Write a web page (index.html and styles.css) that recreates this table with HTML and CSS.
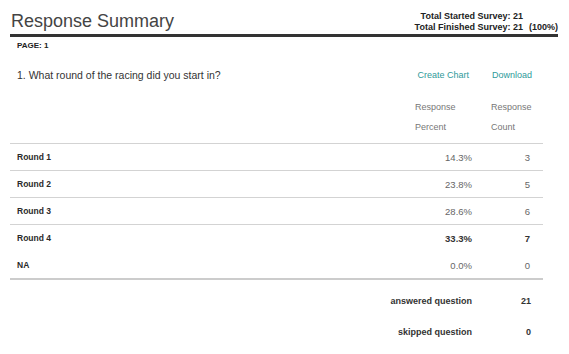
FILE: index.html
```html
<!DOCTYPE html>
<html lang="en">
<head>
  <meta charset="UTF-8" />
  <title>Response Summary</title>
  <link rel="stylesheet" href="styles.css">
</head>
<body>
  <div class="summary-header">
    <h1>Response Summary</h1>
    <div class="totals">
      <span class="total-label">Total Started Survey: 21</span>
      <span></span>
      <span class="total-label">Total Finished Survey: 21</span>
      <span class="total-pct">(100%)</span>
    </div>
  </div>

  <div class="summary">
    <div class="page-label">PAGE: 1</div>

    <div class="question">
      <span class="question-text">1. What round of the racing did you start in?</span>
      <a class="action" href="#">Create Chart</a>
      <a class="action" href="#">Download</a>
    </div>

    <div class="results">
      <div class="row head">
        <span></span>
        <span class="col-pct">Response<br>Percent</span>
        <span class="col-count">Response<br>Count</span>
      </div>
      <div class="row">
        <span class="answer">Round 1</span>
        <span class="col-pct">14.3%</span>
        <span class="col-count">3</span>
      </div>
      <div class="row">
        <span class="answer">Round 2</span>
        <span class="col-pct">23.8%</span>
        <span class="col-count">5</span>
      </div>
      <div class="row">
        <span class="answer">Round 3</span>
        <span class="col-pct">28.6%</span>
        <span class="col-count">6</span>
      </div>
      <div class="row top-answer">
        <span class="answer">Round 4</span>
        <span class="col-pct">33.3%</span>
        <span class="col-count">7</span>
      </div>
      <div class="row last">
        <span class="answer">NA</span>
        <span class="col-pct">0.0%</span>
        <span class="col-count">0</span>
      </div>
    </div>

    <div class="totals-footer">
      <div class="row">
        <span></span>
        <span class="col-pct">answered question</span>
        <span class="col-count">21</span>
      </div>
      <div class="row">
        <span></span>
        <span class="col-pct">skipped question</span>
        <span class="col-count">0</span>
      </div>
    </div>
  </div>
</body>
</html>
```

FILE: styles.css
```css
body {
  margin: 0;
  padding: 0;
  font-family: "Liberation Sans", Arial, Helvetica, sans-serif;
  background-color: #fff;
  color: #333;
}

/* Cabecera con título y totales */
.summary-header {
  display: flex;
  justify-content: space-between;
  align-items: flex-end;
  margin: 0 11px 0 10px;
  border-bottom: 3px solid #333;
}

.summary-header h1 {
  margin: 0;
  padding: 10px 0 2px 1px;
  font-size: 18px;
  line-height: 22px;
  font-weight: normal;
  color: #444;
}

.totals {
  display: grid;
  grid-template-columns: auto auto;
  column-gap: 6px;
  padding-bottom: 1px;
  font-size: 9px;
  line-height: 11px;
  font-weight: bold;
  color: #222;
}

.total-label {
  text-align: right;
}

/* Bloque de la pregunta */
.summary {
  margin-left: 10px;
  width: 533px;
}

.page-label {
  margin-top: 3px;
  padding-left: 7px;
  font-size: 8px;
  line-height: 12px;
  font-weight: bold;
  color: #222;
}

.question {
  display: flex;
  align-items: center;
  margin-top: 16px;
  padding: 0 11px 0 7px;
  line-height: 14px;
}

.question-text {
  flex: 1;
  font-size: 10.5px;
  color: #333;
}

.action {
  margin-left: 23px;
  font-size: 9px;
  color: #2f9a9a;
  text-decoration: none;
}

/* Tabla de resultados */
.results {
  margin-top: 15px;
}

.row {
  display: grid;
  grid-template-columns: 1fr 60px 71px;
  align-items: center;
  height: 26px;
  border-bottom: 1px solid #d3d3d3;
}

.row .answer {
  padding-left: 7px;
  font-size: 8.5px;
  font-weight: bold;
  color: #2a2a2a;
}

.row .col-pct {
  text-align: right;
  font-size: 9.5px;
  color: #666;
}

.row .col-count {
  text-align: right;
  padding-right: 13px;
  font-size: 9.5px;
  color: #666;
}

.row.head {
  height: auto;
  padding: 0 0 6px;
  align-items: start;
}

.row.head .col-pct,
.row.head .col-count {
  text-align: left;
  font-size: 9px;
  line-height: 20px;
  color: #777;
}

.row.head .col-pct {
  padding-left: 3px;
}

.row.head .col-count {
  padding-left: 19px;
  padding-right: 0;
}

.row.top-answer {
  border-bottom-color: transparent;
}

.row.top-answer .col-pct,
.row.top-answer .col-count {
  font-weight: bold;
  color: #333;
}

.row.last {
  border-bottom: 2px solid #ccc;
}

/* Totales de la pregunta */
.totals-footer {
  padding-top: 5px;
}

.totals-footer .row {
  height: 31px;
  border-bottom: none;
  grid-template-columns: 1fr 160px 71px;
}

.totals-footer .row .col-pct,
.totals-footer .row .col-count {
  font-size: 9px;
  font-weight: bold;
  color: #333;
}

.totals-footer .row .col-count {
  padding-right: 12px;
}
```
